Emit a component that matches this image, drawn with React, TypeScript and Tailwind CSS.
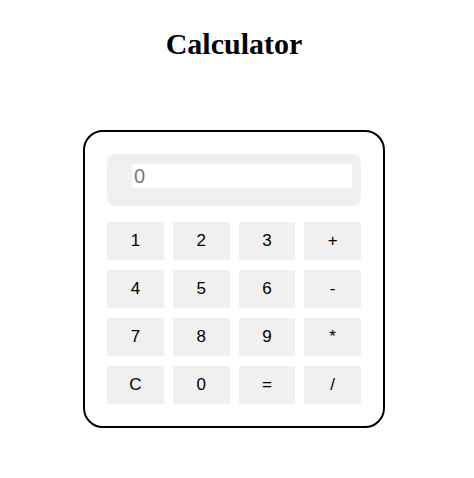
import { useState } from "react";

const keys = ["1", "2", "3", "+", "4", "5", "6", "-", "7", "8", "9", "*", "C", "0", "=", "/"];

export default function App() {
  const [value, setValue] = useState("");

  const press = (k: string) => {
    if (k === "C") return setValue("");
    if (k === "=") {
      try {
        // eslint-disable-next-line no-new-func
        setValue(String(Function(`return (${value || 0})`)()));
      } catch {
        setValue("Error");
      }
      return;
    }
    setValue(value + k);
  };

  return (
    <div className="min-h-[478px] w-[468px] bg-white flex flex-col items-center">
      <h1 className="mt-[26px] text-[30px] font-bold leading-[36px] text-black [font-family:'Liberation_Serif',serif]">
        Calculator
      </h1>
      <div className="mt-[68px] w-[302px] rounded-[20px] border-2 border-black p-[22px] [font-family:'Liberation_Sans',Arial,sans-serif]">
        <div className="h-[52px] rounded-[8px] bg-[#f0f0f0] pl-[25px] pr-[9px] pt-[10px]">
          <input
            readOnly
            value={value}
            placeholder="0"
            className="block h-[24px] w-full bg-white px-[2px] text-[20px] leading-[24px] text-[#555] placeholder:text-[#777] outline-none"
          />
        </div>
        <div className="mt-[16px] grid grid-cols-4 gap-x-[9px] gap-y-[10px]">
          {keys.map((k) => (
            <button
              key={k}
              onClick={() => press(k)}
              className="h-[38px] bg-[#f0f0f0] text-[17px] text-black"
            >
              {k}
            </button>
          ))}
        </div>
      </div>
    </div>
  );
}
